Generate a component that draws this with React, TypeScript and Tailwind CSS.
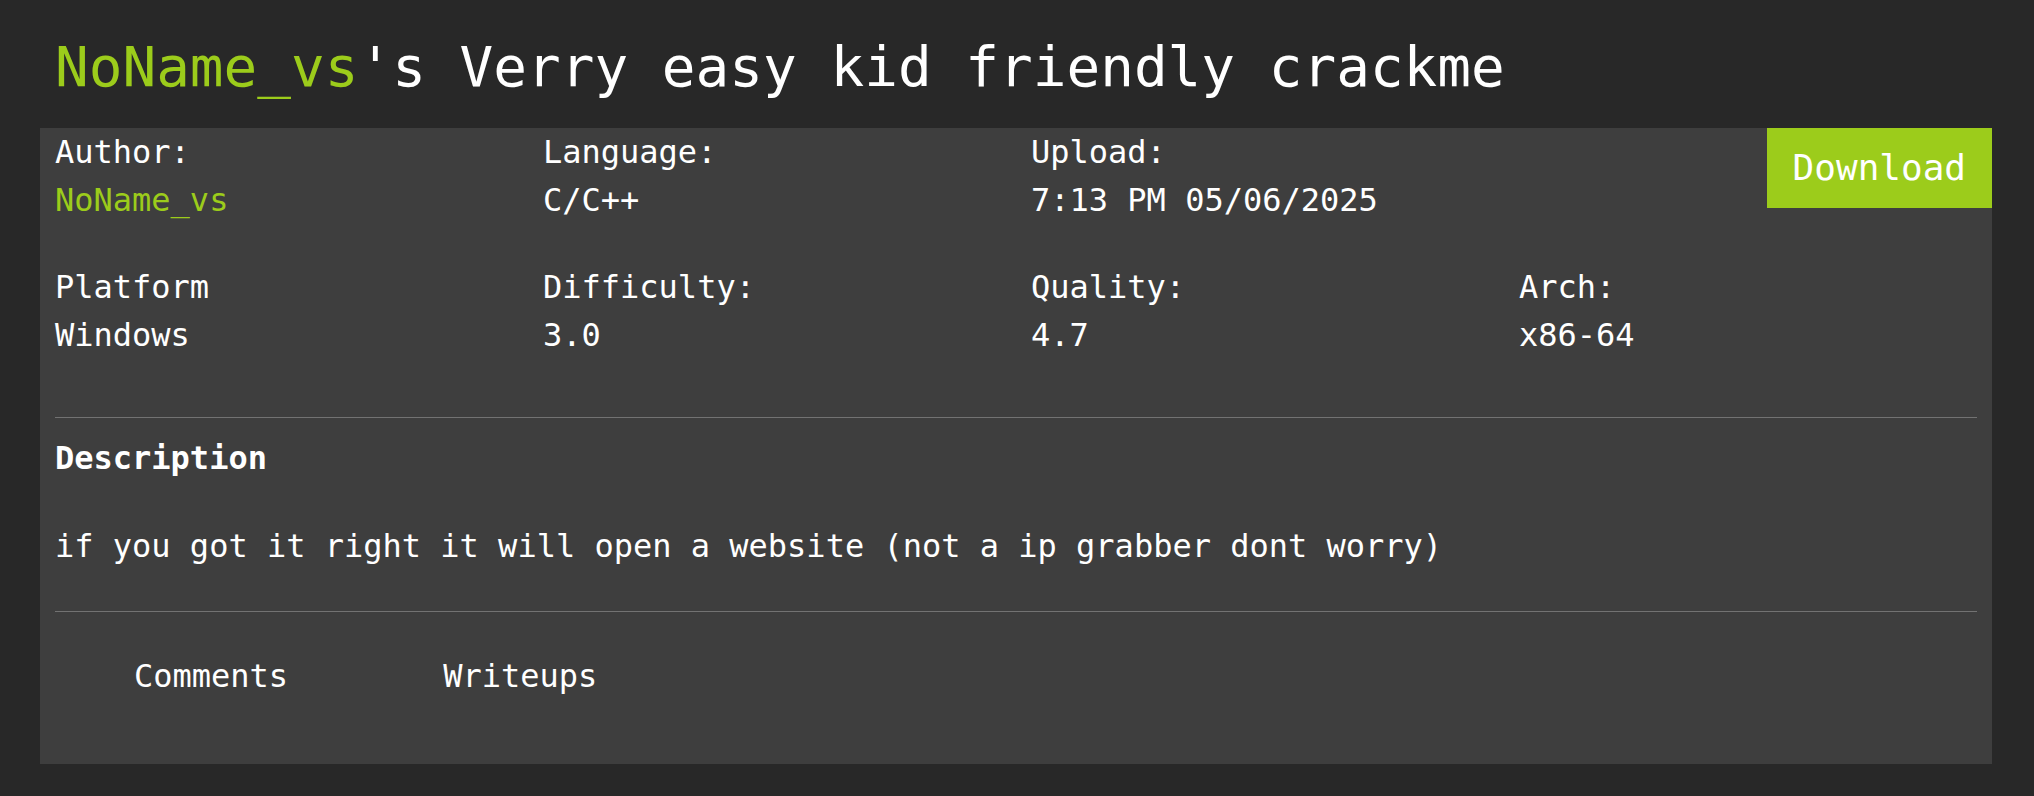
import React from "react";

const mono = { fontFamily: '"DejaVu Sans Mono", "Liberation Mono", monospace' };

const infoRows = [
  [
    { label: "Author:", value: "NoName_vs", green: true },
    { label: "Language:", value: "C/C++" },
    { label: "Upload:", value: "7:13 PM 05/06/2025" },
  ],
  [
    { label: "Platform", value: "Windows" },
    { label: "Difficulty:", value: "3.0" },
    { label: "Quality:", value: "4.7" },
    { label: "Arch:", value: "x86-64" },
  ],
];

const InfoCell = ({ label, value, green }: { label: string; value: string; green?: boolean }) => (
  <div className="pl-[15px] text-[32px] leading-[48px]">
    <p className="text-white">{label}</p>
    <p className={green ? "text-[#9ccc1b]" : "text-white"}>{value}</p>
  </div>
);

const App = () => {
  return (
    <div style={mono} className="min-h-[796px] w-full bg-[#282828]">
      <div className="ml-[40px] w-[1952px]">
        <h1 className="pl-[15px] pt-[39px] pb-[33px] text-[56px] leading-[56px] text-white">
          <span className="text-[#9ccc1b]">NoName_vs</span>'s Verry easy kid friendly crackme
        </h1>

        <div className="h-[636px] bg-[#3e3e3e]">
          <div className="grid grid-cols-4">
            {infoRows[0].map((c) => (
              <InfoCell key={c.label} {...c} />
            ))}
            <div className="flex justify-end items-start">
              <button className="bg-[#9ccc1b] px-[26px] py-[13px] text-[36px] leading-[54px] text-white">
                Download
              </button>
            </div>
          </div>
          <div className="mt-[39px] grid grid-cols-4">
            {infoRows[1].map((c) => (
              <InfoCell key={c.label} {...c} />
            ))}
          </div>

          <div className="mx-[15px] mt-[58px] h-px bg-[#727272]" />

          <div className="px-[15px] text-[32px] leading-[48px] text-white">
            <p className="mt-[16px] font-bold">Description</p>
            <p className="mt-[40px]">if you got it right it will open a website (not a ip grabber dont worry)</p>
          </div>

          <div className="mx-[15px] mt-[41px] h-px bg-[#727272]" />

          <div className="mt-[40px] flex pl-[15px] text-[32px] leading-[48px] text-white">
            <span className="px-[79px]">Comments</span>
            <span className="px-[76px]">Writeups</span>
          </div>
        </div>
      </div>
    </div>
  );
};

export default App;
